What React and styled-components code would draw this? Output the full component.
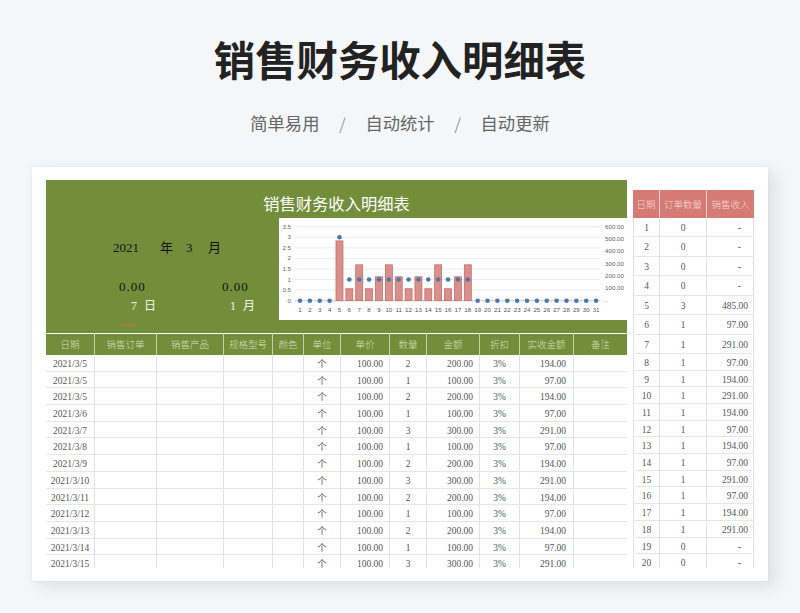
import styled, { createGlobalStyle } from 'styled-components';

const GlobalStyle = createGlobalStyle`
  html, body { margin: 0; padding: 0; }
  body { background: #f4f6f8; overflow: hidden; }
`;

const sheetFont = `"Liberation Serif", "Noto Sans CJK SC", serif`;
const columns = '49px 62px 67px 49px 31px 37px 49px 37px 53px 40px 54px 53px';
const sideColumns = '27px 47px 47px';

const Page = styled.div`
  width: 800px;
  height: 613px;
  display: flex;
  flex-direction: column;
  align-items: center;
  font-family: "Noto Sans CJK SC", sans-serif;
`;

const Title = styled.h1`
  margin: 25px 0 0;
  height: 67px;
  font-size: 41.4px;
  line-height: 67px;
  font-weight: 700;
  color: #222;
`;

const Tagline = styled.div`
  margin-top: 18px;
  height: 26px;
  display: flex;
  align-items: center;
  gap: 19px;
  font-size: 17.3px;
  line-height: 26px;
  color: #666;
`;

const Slash = styled.span`
  width: 8px;
  font-size: 16px;
  font-weight: 300;
  text-align: center;
  color: #777;
`;

const Card = styled.div`
  box-sizing: border-box;
  margin-top: 31px;
  width: 736px;
  height: 414px;
  padding: 13px 14px;
  display: flex;
  gap: 6px;
  background: #fff;
  box-shadow: 0 0 3px rgba(120, 130, 140, 0.12), 8px 6px 14px rgba(120, 130, 140, 0.16);
`;

const Main = styled.div`
  width: 581px;
  height: 388px;
  overflow: hidden;
  font-family: ${sheetFont};
`;

const Banner = styled.div`
  height: 153px;
  background: #738e3a;
  display: flex;
  flex-direction: column;
`;

const BannerTitle = styled.div`
  height: 38px;
  padding-top: 4px;
  box-sizing: border-box;
  text-align: center;
  font-size: 16.3px;
  line-height: 38px;
  color: #fff;
  font-family: "Noto Sans CJK SC", sans-serif;
`;

const BannerBody = styled.div`
  display: flex;
`;

const Summary = styled.div`
  width: 233px;
  height: 102px;
  display: flex;
  flex-direction: column;
`;

const DateLine = styled.div`
  margin-top: 22px;
  padding-left: 67px;
  height: 16px;
  display: flex;
  font-size: 13px;
  line-height: 16px;
  color: #111;
`;

const DatePart = styled.span`
  width: ${({ $w }) => $w}px;
`;

const Figures = styled.div`
  margin-top: 23px;
  display: grid;
  grid-template-columns: 103px 60px;
  padding-left: 73px;
  font-size: 13px;
  line-height: 16px;
  letter-spacing: 1px;
  color: #111;
`;

const Counts = styled.div`
  margin-top: 3px;
  display: grid;
  grid-template-columns: 99px 60px;
  padding-left: 85px;
  font-size: 12px;
  line-height: 16px;
  color: #f4f4ea;
  word-spacing: 4px;
`;

const Overflow = styled.div`
  margin-top: 8px;
  padding-left: 73px;
  font-size: 5.5px;
  line-height: 7px;
  letter-spacing: 0;
  color: #c1784f;
`;

const ChartBox = styled.div`
  width: 348px;
  height: 102px;
  background: #fff;
`;

const HeadRow = styled.div`
  margin-top: 1px;
  height: 21px;
  display: grid;
  grid-template-columns: ${columns};
  background: #738e3a;
`;

const HeadCell = styled.div`
  border-right: 1px solid #c3d0a0;
  text-align: center;
  font-size: 9.5px;
  line-height: 20px;
  color: #d5deba;
  font-family: "Noto Sans CJK SC", sans-serif;
  font-weight: 300;
  &:last-child { border-right: 0; }
`;

const Row = styled.div`
  box-sizing: border-box;
  height: ${({ $tall }) => ($tall ? '19.43px' : '16.7px')};
  display: grid;
  grid-template-columns: ${({ $side }) => ($side ? sideColumns : columns)};
  grid-template-rows: ${({ $tall }) => ($tall ? '18.43px' : '15.7px')};
  border-bottom: 1px solid #e6e6e6;
`;

const Cell = styled.div`
  box-sizing: border-box;
  border-right: 1px solid #e2e2e2;
  padding-right: ${({ $right }) => ($right ? `${$right}px` : 0)};
  text-align: ${({ $right }) => ($right ? 'right' : 'center')};
  font-size: 9.5px;
  line-height: 18.5px;
  color: #555;
  white-space: nowrap;
  &:last-child { border-right: 0; }
`;

const SideCell = styled(Cell)`
  line-height: ${({ $tall }) => ($tall ? '21.5px' : '18.5px')};
  &:first-child { border-left: 1px solid #e2e2e2; }
  &:last-child { border-right: 1px solid #e2e2e2; }
`;

const Side = styled.div`
  margin-top: 10px;
  width: 121px;
  height: 378px;
  overflow: hidden;
  font-family: ${sheetFont};
`;

const SideHead = styled.div`
  height: 28px;
  display: grid;
  grid-template-columns: ${sideColumns};
  background: #d57a74;
`;

const SideHeadCell = styled.div`
  border-right: 1px solid #f2d5d2;
  text-align: center;
  font-size: 9.5px;
  line-height: 28px;
  color: #f6dcd9;
  font-family: "Noto Sans CJK SC", sans-serif;
  font-weight: 300;
  &:last-child { border-right: 0; }
`;

const heads = ['日期', '销售订单', '销售产品', '规格型号', '颜色', '单位', '单价', '数量', '金额', '折扣', '实收金额', '备注'];

const sales = [
  ['3/5', 2], ['3/5', 1], ['3/5', 2], ['3/6', 1], ['3/7', 3], ['3/8', 1], ['3/9', 2],
  ['3/10', 3], ['3/11', 2], ['3/12', 1], ['3/13', 2], ['3/14', 1], ['3/15', 3],
];

const income = [0, 0, 0, 0, 485, 97, 291, 97, 194, 291, 194, 97, 194, 97, 291, 97, 194, 291, 0, 0];
const money = (n) => n.toFixed(2);

function SalesChart() {
  const left = 21;
  const base = 82.7;
  const step = 9.87;
  const x = (day) => left + (day - 1) * step;
  const days = Array.from({ length: 31 }, (_, i) => i + 1);
  const grid = [0, 0.5, 1, 1.5, 2, 2.5, 3, 3.5];
  const y = (v) => base - v * 21.14;
  const labelFont = 'Liberation Sans, sans-serif';
  return (
    <svg width="348" height="102" viewBox="0 0 348 102">
      {grid.map((g) => (
        <line key={g} x1="16" x2="321" y1={y(g)} y2={y(g)} stroke={g ? '#e6e6e6' : '#c4c4c4'} strokeWidth="0.8" />
      ))}
      {grid.map((g) => (
        <text key={g} x="12" y={y(g) + 2} fontSize="6.2" fill="#666" textAnchor="end" fontFamily={labelFont}>{g}</text>
      ))}
      {[100, 200, 300, 400, 500, 600].map((v) => (
        <text key={v} x="345" y={base - v * 0.1233 + 2} fontSize="6.2" fill="#666" textAnchor="end" fontFamily={labelFont}>
          {v}.00
        </text>
      ))}
      <text x="326" y={base + 2} fontSize="6.2" fill="#666" fontFamily={labelFont}>-</text>
      {days.map((d) => (
        <line key={d} x1={x(d) - step / 2} x2={x(d) - step / 2} y1={base} y2={base + 1.6} stroke="#c4c4c4" strokeWidth="0.6" />
      ))}
      {days.map((d) => {
        const v = income[d - 1] || 0;
        return v ? (
          <rect key={d} x={x(d) - 3.5} width="7" y={base - v * 0.1233} height={v * 0.1233} fill="#d98f8b" stroke="#c4625d" strokeWidth="0.7" />
        ) : null;
      })}
      {days.map((d) => {
        const v = income[d - 1] || 0;
        const n = d === 5 ? 3 : v ? 1 : 0;
        return <circle key={d} cx={x(d)} cy={y(n)} r="2.3" fill="#4a78ad" />;
      })}
      {days.map((d) => (
        <text key={d} x={x(d)} y="93.5" fontSize="6.2" fill="#555" textAnchor="middle" fontFamily={labelFont}>{d}</text>
      ))}
    </svg>
  );
}

export default function App() {
  return (
    <Page>
      <GlobalStyle />
      <Title>销售财务收入明细表</Title>
      <Tagline>
        <span>简单易用</span>
        <Slash>/</Slash>
        <span>自动统计</span>
        <Slash>/</Slash>
        <span>自动更新</span>
      </Tagline>
      <Card>
        <Main>
          <Banner>
            <BannerTitle>销售财务收入明细表</BannerTitle>
            <BannerBody>
              <Summary>
                <DateLine>
                  <DatePart $w={47}>2021</DatePart>
                  <DatePart $w={26}>年</DatePart>
                  <DatePart $w={22}>3</DatePart>
                  <DatePart $w={14}>月</DatePart>
                </DateLine>
                <Figures>
                  <span>0.00</span>
                  <span>0.00</span>
                </Figures>
                <Counts>
                  <span>7 日</span>
                  <span>1 月</span>
                </Counts>
                <Overflow>######</Overflow>
              </Summary>
              <ChartBox>
                <SalesChart />
              </ChartBox>
            </BannerBody>
          </Banner>
          <HeadRow>
            {heads.map((h) => <HeadCell key={h}>{h}</HeadCell>)}
          </HeadRow>
          {sales.map(([date, qty], i) => (
            <Row key={i}>
              <Cell>2021/{date}</Cell>
              <Cell />
              <Cell />
              <Cell />
              <Cell />
              <Cell>个</Cell>
              <Cell $right={6}>100.00</Cell>
              <Cell>{qty}</Cell>
              <Cell $right={6}>{money(qty * 100)}</Cell>
              <Cell>3%</Cell>
              <Cell $right={7}>{money(qty * 97)}</Cell>
              <Cell />
            </Row>
          ))}
        </Main>
        <Side>
          <SideHead>
            <SideHeadCell>日期</SideHeadCell>
            <SideHeadCell>订单数量</SideHeadCell>
            <SideHeadCell>销售收入</SideHeadCell>
          </SideHead>
          {income.map((v, i) => {
            const tall = i < 7;
            return (
              <Row key={i} $side $tall={tall}>
                <SideCell $tall={tall}>{i + 1}</SideCell>
                <SideCell $tall={tall}>{i === 4 ? 3 : v ? 1 : 0}</SideCell>
                <SideCell $tall={tall} $right={v ? 5 : 12}>{v ? money(v) : '-'}</SideCell>
              </Row>
            );
          })}
        </Side>
      </Card>
    </Page>
  );
}
